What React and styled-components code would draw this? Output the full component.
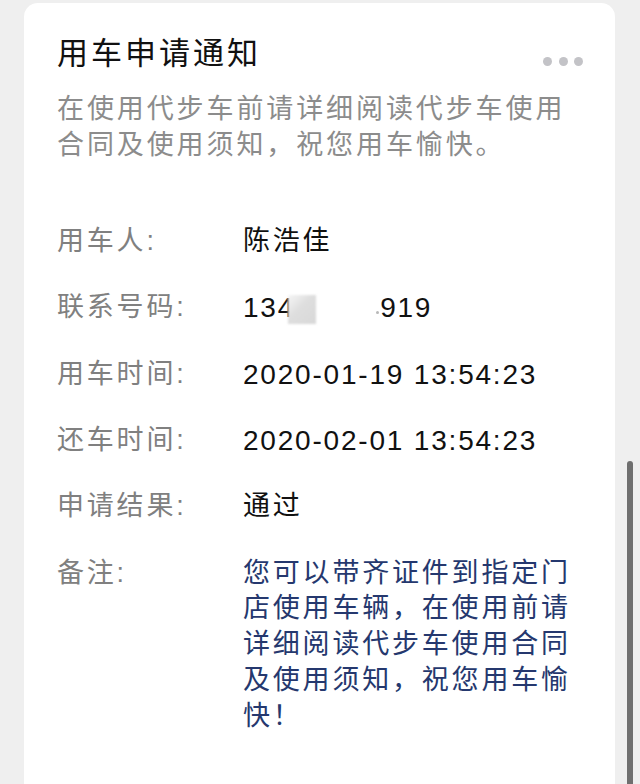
import React from "react";
import styled, { createGlobalStyle } from "styled-components";

const Global = createGlobalStyle`
  html, body {
    margin: 0;
    padding: 0;
    background: #efefef;
    overflow: hidden;
  }
  body {
    font-family: "Liberation Sans", "Noto Sans CJK SC", sans-serif;
  }
`;

const Page = styled.div`
  display: flex;
  height: 784px;
  overflow: hidden;
`;

const Card = styled.div`
  margin: 3px 0 0 24px;
  width: 591px;
  min-height: 820px;
  background: #ffffff;
  border-radius: 14px 14px 0 0;
  box-sizing: border-box;
  padding: 31px 32px 0 33px;
`;

const Header = styled.div`
  display: flex;
  justify-content: space-between;
  align-items: flex-start;
`;

const Title = styled.h1`
  margin: 0;
  font-size: 31px;
  line-height: 40px;
  font-weight: 400;
  letter-spacing: 3px;
  color: #111111;
`;

const Dots = styled.div`
  display: flex;
  gap: 6.5px;
  margin-top: 22.5px;
`;

const Dot = styled.span`
  width: 9px;
  height: 9px;
  border-radius: 50%;
  background: #c3c3c7;
`;

const Desc = styled.p`
  margin: 18px 0 0;
  font-size: 27px;
  line-height: 35.5px;
  letter-spacing: 2.9px;
  color: #8c8c8c;
`;

const Rows = styled.div`
  margin-top: 61px;
  display: grid;
  grid-template-columns: 186px 1fr;
  row-gap: 30.6px;
`;

const Label = styled.div`
  font-size: 27px;
  line-height: 35.75px;
  letter-spacing: 2.8px;
  color: #808080;
`;

const Value = styled.div`
  font-size: ${(p) => (p.$numeric ? "28px" : "27px")};
  line-height: 35.75px;
  letter-spacing: ${(p) => (p.$numeric ? "1.8px" : "2.8px")};
  color: ${(p) => (p.$accent ? "#25386e" : "#111111")};
  max-width: ${(p) => (p.$accent ? "345px" : "none")};
  display: flex;
  align-items: center;
  flex-wrap: wrap;
`;

const Plain = styled.span`
  display: inline;
`;

const Mask = styled.span`
  display: inline-flex;
  align-items: flex-start;
  width: 85px;
  height: 35.75px;
`;

const BlurPatch = styled.span`
  display: block;
  width: 28px;
  height: 29px;
  margin: 5px 0 0 -7px;
  background: linear-gradient(135deg, #f6f6f6 0%, #dedede 45%, #d8d8d8 100%);
  filter: blur(1px);
`;

const Speck = styled.span`
  display: block;
  width: 3px;
  height: 3px;
  border-radius: 50%;
  background: #b8b8b8;
  margin: 21px 0 0 60px;
`;

const Track = styled.div`
  flex: 1;
  display: flex;
  justify-content: flex-start;
  padding-top: 461px;
`;

const Thumb = styled.div`
  margin-left: 12px;
  width: 6px;
  height: 340px;
  border-radius: 3px 3px 0 0;
  background: #6f6f6f;
`;

const rows = [
  { label: "用车人:", value: "陈浩佳" },
  { label: "联系号码:", phone: true },
  { label: "用车时间:", value: "2020-01-19 13:54:23", numeric: true },
  { label: "还车时间:", value: "2020-02-01 13:54:23", numeric: true },
  { label: "申请结果:", value: "通过" },
  {
    label: "备注:",
    value:
      "您可以带齐证件到指定门店使用车辆，在使用前请详细阅读代步车使用合同及使用须知，祝您用车愉快！",
    accent: true,
  },
];

export default function App() {
  return (
    <>
      <Global />
      <Page>
        <Card>
          <Header>
            <Title>用车申请通知</Title>
            <Dots>
              <Dot />
              <Dot />
              <Dot />
            </Dots>
          </Header>
          <Desc>在使用代步车前请详细阅读代步车使用合同及使用须知，祝您用车愉快。</Desc>
          <Rows>
            {rows.map((r) => (
              <React.Fragment key={r.label}>
                <Label>{r.label}</Label>
                {r.phone ? (
                  <Value $numeric>
                    <Plain>134</Plain>
                    <Mask>
                      <BlurPatch />
                      <Speck />
                    </Mask>
                    <Plain>919</Plain>
                  </Value>
                ) : (
                  <Value $numeric={r.numeric} $accent={r.accent}>
                    {r.value}
                  </Value>
                )}
              </React.Fragment>
            ))}
          </Rows>
        </Card>
        <Track>
          <Thumb />
        </Track>
      </Page>
    </>
  );
}
